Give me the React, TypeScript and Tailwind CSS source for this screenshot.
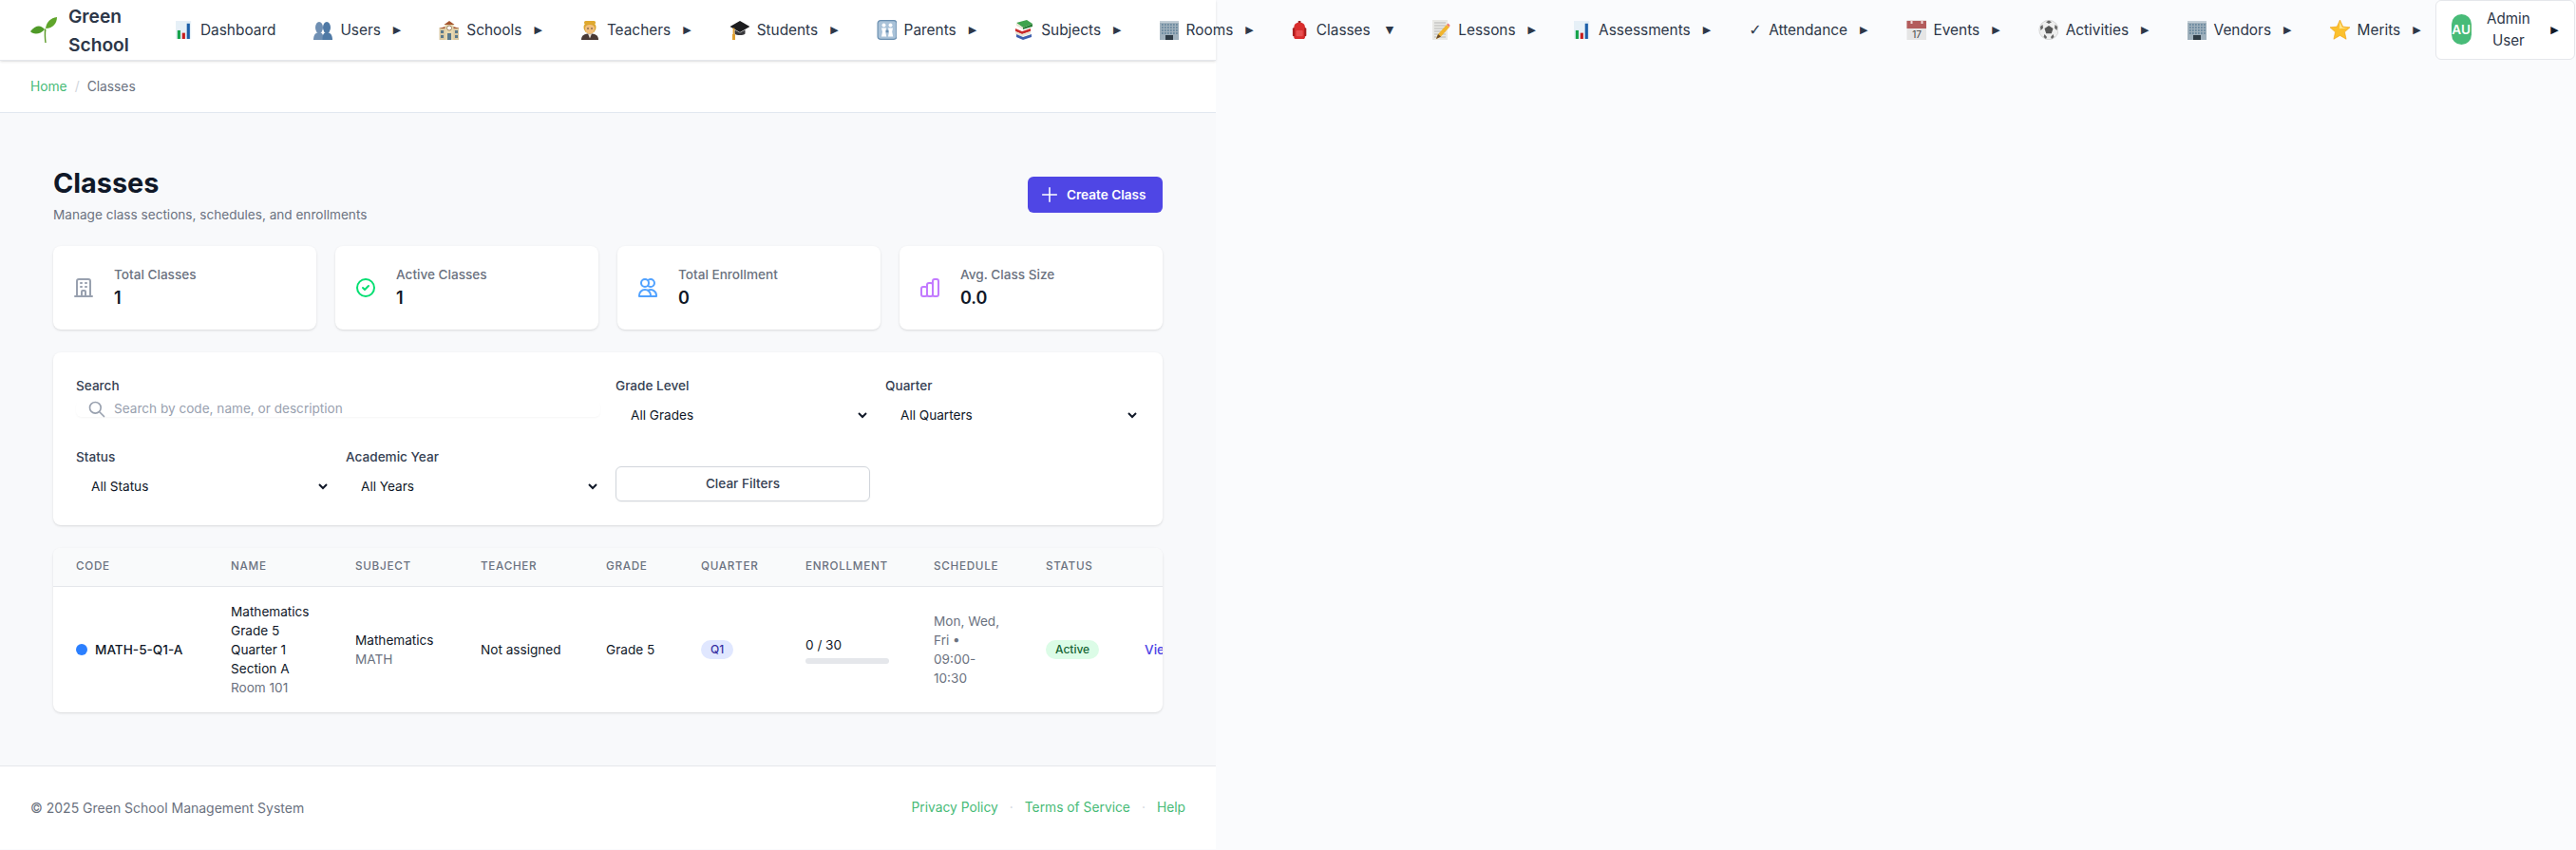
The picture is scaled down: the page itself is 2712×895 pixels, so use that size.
import React from "react";
import { HiOutlineOfficeBuilding, HiOutlineCheckCircle, HiOutlineUsers, HiOutlineChartBar, HiOutlineSearch } from "react-icons/hi";

const S = ({ w = 20, h = 21, vb = "0 0 20 21", children }: { w?: number; h?: number; vb?: string; children: React.ReactNode }) => (
  <svg width={w} height={h} viewBox={vb} className="shrink-0">{children}</svg>
);
const Chart = () => (
  <S w={18}><rect x="0" y="0" width="18" height="21" fill="#e6f0f7" /><rect x="2" y="11" width="3.500" height="10" fill="#16a34a" /><rect x="7.500" y="14" width="3.500" height="7" fill="#c81e1e" /><rect x="13" y="3" width="3.500" height="18" fill="#1d5fa8" /></S>
);
const Busts = () => (
  <S w={20}><g fill="#6f8fb3"><ellipse cx="6" cy="8" rx="4" ry="6" /><path d="M0 21c0-6 3-8 6-8s4.500 2 4.500 8z" /></g><g fill="#4f79a5"><ellipse cx="14" cy="8" rx="4" ry="6" /><path d="M9.500 21c0-6 1.500-8 4.500-8s6 2 6 8z" /></g></S>
);
const School = () => (
  <S w={21}><rect x="0" y="8" width="21" height="13" fill="#d9c9a3" /><rect x="6" y="4" width="9" height="17" fill="#e8d8b0" /><path d="M5 5l5.500-4 5.500 4z" fill="#a5562f" /><path d="M0 9l6-2v2zM21 9l-6-2v2z" fill="#a5562f" /><circle cx="10.500" cy="8.500" r="2.500" fill="#fff" stroke="#7a5a30" strokeWidth=".7" /><g fill="#5c7a8c"><rect x="1.500" y="11" width="3" height="3" /><rect x="16.500" y="11" width="3" height="3" /><rect x="1.500" y="16" width="3" height="3" /><rect x="16.500" y="16" width="3" height="3" /><rect x="8.500" y="14" width="4" height="7" /></g></S>
);
const Teacher = () => (
  <S w={20}><path d="M1 21c0-5 3-6.500 9-6.500s9 1.500 9 6.500z" fill="#4a3a35" /><path d="M8 14.500h4l-2 5z" fill="#e8e0d8" /><circle cx="10" cy="8" r="6.500" fill="#d9a52e" /><path d="M5 9c0-3 2-4 5-4s5 1 5 4c0 3-2 5.500-5 5.500S5 12 5 9z" fill="#f2bf7d" /><rect x="4" y="1" width="12" height="3.500" rx="1.500" fill="#e0a92f" /><circle cx="8" cy="9" r=".8" fill="#4a3a35" /><circle cx="12" cy="9" r=".8" fill="#4a3a35" /></S>
);
const Cap = () => (
  <S w={21}><path d="M10.500 1L21 7l-10.500 6L0 7z" fill="#1d1d1f" /><path d="M5 10.500v4c2 2 9 2 11 0v-4l-5.500 3z" fill="#38383b" /><path d="M4 8.500v8" stroke="#e0a030" strokeWidth="1.800" /><rect x="2.500" y="15" width="3" height="6" fill="#e0a030" /></S>
);
const Parents = () => (
  <S w={21}><rect x=".6" y=".6" width="19.800" height="19.800" rx="3" fill="#a9c2d8" stroke="#6a8fb0" strokeWidth="1.200" /><g fill="#fff"><circle cx="7" cy="5.500" r="2" /><path d="M4.500 8.500h5l-.8 4 1 5H4.500l1-5z" /><circle cx="14" cy="5.500" r="2" /><path d="M11.500 8.500h5l-.8 4 1 5h-5.200l1-5z" /></g><circle cx="10.500" cy="12" r="1.400" fill="#6a8fb0" /></S>
);
const Books = () => (
  <S w={20}><path d="M2 3l11-3 6 4-10 4z" fill="#3fa34d" /><path d="M2 3v3l7 4V8z" fill="#e9e5d5" /><path d="M9 8l10-4v3L9 10z" fill="#2b7f38" /><path d="M1 9l7 3 9-3v3l-9 3-7-3z" fill="#c92c2c" /><path d="M1 12l7 3 9-3v2.500l-9 3-7-3z" fill="#e9e5d5" /><path d="M2 15l7 3 9-3v3l-9 3-7-3z" fill="#3f5fae" /></S>
);
const Office = () => (
  <S w={20}><rect x="0" y="1" width="20" height="20" fill="#9fb0bc" /><rect x="0" y="1" width="20" height="2" fill="#c3ced6" /><g fill="#6d8ba0">{[4, 7, 10, 13].map(y => [2, 5, 8, 11, 14, 17].map(x => <rect key={x + "-" + y} x={x} y={y} width="1.700" height="2" />))}</g><rect x="6" y="16" width="8" height="5" fill="#2f3c46" /></S>
);
const Backpack = () => (
  <S w={18}><path d="M7.500 0h3v3h-3z" fill="#8f1c1c" /><path d="M2.500 8c0-4 2.500-6 6.500-6s6.500 2 6.500 6v11c0 1-1 2-2 2h-9c-1 0-2-1-2-2z" fill="#d92d2d" /><rect x="1" y="8" width="2.500" height="10" rx="1" fill="#a92020" /><rect x="14.500" y="8" width="2.500" height="10" rx="1" fill="#a92020" /><rect x="5" y="11" width="8" height="7" rx="1" fill="#e85050" /></S>
);
const Memo = () => (
  <S w={20} vb="-1 0 20 21"><rect x="0" y="0" width="16" height="21" fill="#e9e9e6" /><g stroke="#a9a9a9" strokeWidth=".8">{[3, 6, 9, 12, 15, 18].map(y => <path key={y} d={"M2 " + y + "h12"} />)}</g><path d="M4 20l2-5L15 5l3 2.500-9 10z" fill="#f1b52e" /><path d="M15 5l1.500-1.500 2 2L18 7.500z" fill="#e77" /><path d="M4 20l2-5 3 2.500z" fill="#6b4b2a" /></S>
);
const Cal = () => (
  <S w={21}><rect x="0" y="0" width="21" height="21" fill="#e5e5e5" /><rect x="0" y="1" width="21" height="8" fill="#b35c5c" /><rect x="4" y="0" width="2" height="4" fill="#f0d8d8" /><rect x="15" y="0" width="2" height="4" fill="#f0d8d8" /><text x="10.500" y="19" textAnchor="middle" fontSize="10" fill="#444" fontFamily="Inter, sans-serif">17</text></S>
);
const Ball = () => (
  <S w={21}><circle cx="10.500" cy="10.500" r="10.200" fill="#eee" stroke="#bbb" strokeWidth=".5" /><path d="M10.500 6l4.500 3-1.700 5.200H7.700L6 9z" fill="#555" /><path d="M10.500 .5l3 1.800-3 1.700-3-1.700zM1.500 7l2.500-2 .5 3.500L2 11zM19.500 7l-2.500-2-.5 3.500L19 11zM5 18l1-3 2.500 3-1 2zM16 18l-1-3-2.500 3 1 2z" fill="#666" /></S>
);
const Star = () => (
  <S w={21} h={21} vb="0 0 22 22"><path d="M11 0l3.300 7.400 7.700.8-5.800 5.200 1.700 7.800L11 17.200 4.100 21.200l1.700-7.800L0 8.200l7.700-.8z" fill="#fbc02d" stroke="#f09a10" strokeWidth=".6" /><path d="M11 2l2.500 6.200 5.800.6-9 1z" fill="#ffe58a" /></S>
);
const Check = () => <span className="shrink-0 w-[13px] text-center text-[16px] leading-none font-['DejaVu_Sans',sans-serif]">✓</span>;

const items: { icon: React.ReactNode; label: string; arrow?: string }[] = [
  { icon: <Chart />, label: "Dashboard", arrow: "" },
  { icon: <Busts />, label: "Users" },
  { icon: <School />, label: "Schools" },
  { icon: <Teacher />, label: "Teachers" },
  { icon: <Cap />, label: "Students" },
  { icon: <Parents />, label: "Parents" },
  { icon: <Books />, label: "Subjects" },
  { icon: <Office />, label: "Rooms" },
  { icon: <Backpack />, label: "Classes", arrow: "▼" },
  { icon: <Memo />, label: "Lessons" },
  { icon: <Chart />, label: "Assessments" },
  { icon: <Check />, label: "Attendance" },
  { icon: <Cal />, label: "Events" },
  { icon: <Ball />, label: "Activities" },
  { icon: <Office />, label: "Vendors" },
  { icon: <Star />, label: "Merits" },
];

const Arrow = ({ ch = "▶", cls = "text-[#2d3748]" }: { ch?: string; cls?: string }) => (
  <span className={(ch === "▼" ? "ml-[8px] " : "ml-[5px] ") + "text-[11px] leading-none font-['DejaVu_Sans',sans-serif] " + cls}>{ch}</span>
);

const stats = [
  { icon: <HiOutlineOfficeBuilding className="w-6 h-6 text-gray-400 shrink-0" />, label: "Total Classes", value: "1" },
  { icon: <HiOutlineCheckCircle className="w-6 h-6 text-green-400 shrink-0" />, label: "Active Classes", value: "1" },
  { icon: <HiOutlineUsers className="w-6 h-6 text-blue-400 shrink-0" />, label: "Total Enrollment", value: "0" },
  { icon: <HiOutlineChartBar className="w-6 h-6 text-purple-400 shrink-0" />, label: "Avg. Class Size", value: "0.0" },
];

const Sel = ({ label, value }: { label: string; value: string }) => (
  <div>
    <label className="block text-[13.6px] leading-[22px] font-medium text-gray-700">{label}</label>
    <select defaultValue={value} className="block w-full h-[36px] mt-[2px] pl-3 bg-white text-[13.6px] text-gray-900 rounded-md">
      <option>{value}</option>
    </select>
  </div>
);

const cols = [
  ["Code", 163], ["Name", 131], ["Subject", 132], ["Teacher", 132], ["Grade", 100], ["Quarter", 110], ["Enrollment", 135], ["Schedule", 118], ["Status", 104], ["", 110],
] as const;

const td = "px-6 py-4 text-[13.6px] leading-5 align-middle";
const gray = "text-[#6b7280]";

export default function App() {
  return (
    <div className="min-h-screen overflow-hidden bg-[#fafbfd] font-['Inter',sans-serif] text-[#2d3748]">
      <div className="w-[1280px] flex flex-col">
        <nav className="relative z-10 h-[64px] bg-white border-b border-[#e5e7eb] shadow-sm flex items-center gap-2 pl-8 whitespace-nowrap">
          <div className="flex items-center gap-3 mr-[26px] shrink-0">
            <svg width="28" height="27" viewBox="0 0 28 27" className="shrink-0">
              <path d="M15 12c-.6 5-.3 10 .3 15h1.400c-.6-5-.8-10-.2-14z" fill="#5d9c2a" />
              <path d="M16 12C17 5 21 1 28 0c0 6-4 12-12 12z" fill="#5fa52b" />
              <path d="M15 13C11 8 6 8 0 15c2 3 10 4 15-2z" fill="#4f9a28" />
            </svg>
            <span className="w-[63px] whitespace-normal text-[19.2px] leading-[30px] font-semibold text-[#2d3748]">Green School</span>
          </div>
          {items.map((it) => (
            <div key={it.label} className="flex items-center gap-2 px-4 text-[15.4px] leading-[23px] shrink-0">
              {it.icon}
              <span>{it.label}</span>
              {it.arrow !== "" && <Arrow ch={it.arrow ?? "▶"} />}
            </div>
          ))}
          <div className="flex items-center shrink-0 w-[147px] h-[63px] -ml-[9px] bg-white border border-[#e5e7eb] rounded-md pl-4 pr-4 text-[15.2px] leading-[23px] -mt-[1px]">
            <span className="w-[21px] h-8 rounded-full bg-[#48bb78] text-white text-[13.6px] font-semibold flex items-center justify-center shrink-0 overflow-hidden">AU</span>
            <span className="flex-1 whitespace-normal text-center px-3">Admin User</span>
            <Arrow cls="text-[#111827]" />
          </div>
        </nav>

        <div className="h-[55px] bg-white border-b border-[#e2e8f0] pl-8 flex items-center gap-2 text-[13.8px]">
          <span className="text-[#48bb78]">Home</span>
          <span className="text-gray-300">/</span>
          <span className={gray}>Classes</span>
        </div>

        <main className="bg-[#f8f9fb] px-14 pt-14 pb-14">
          <div className="flex items-center justify-between mb-[22px]">
            <div>
              <h1 className="text-[28.8px] leading-9 font-bold text-gray-900">Classes</h1>
              <p className={"mt-1 text-[13.6px] leading-[22px] " + gray}>Manage class sections, schedules, and enrollments</p>
            </div>
            <button className="h-[38px] w-[142px] mb-[2px] flex items-center gap-[7px] pl-3 bg-[#4f46e5] text-white rounded-md text-[13.6px] font-semibold">
              <svg width="22" height="22" viewBox="0 0 24 24" fill="none" stroke="currentColor" strokeWidth="1.700" strokeLinecap="round" className="shrink-0"><path d="M12 4v16m8-8H4" /></svg>
              Create Class
            </button>
          </div>

          <div className="grid grid-cols-4 gap-5 mb-6">
            {stats.map((s) => (
              <div key={s.label} className="h-[88px] bg-white rounded-lg shadow-sm flex items-center px-5 gap-5">
                {s.icon}
                <div>
                  <div className={"text-[13.6px] leading-[22px] font-medium " + gray}>{s.label}</div>
                  <div className="text-[18px] leading-7 font-semibold text-gray-900">{s.value}</div>
                </div>
              </div>
            ))}
          </div>

          <div className="bg-white rounded-lg shadow-sm px-6 pt-6 pb-[23px] mb-6">
            <div className="grid grid-cols-4 gap-x-4 gap-y-[15px]">
              <div className="col-span-2">
                <label className="block text-[13.6px] leading-[22px] font-medium text-gray-700">Search</label>
                <div className="mt-[5px] h-[17px] flex items-center rounded-md shadow-[0_1px_2px_rgba(0,0,0,0.04)] pl-[12px]">
                  <HiOutlineSearch className="w-5 h-5 text-gray-400 shrink-0" />
                  <span className="ml-[8px] text-[13.6px] text-gray-400">Search by code, name, or description</span>
                </div>
              </div>
              <Sel label="Grade Level" value="All Grades" />
              <Sel label="Quarter" value="All Quarters" />
              <Sel label="Status" value="All Status" />
              <Sel label="Academic Year" value="All Years" />
              <div className="flex items-end pb-[2px]">
                <button className="w-full h-[37px] bg-white border border-[#d1d5db] rounded-md text-[13.6px] font-medium text-gray-700 shadow-[0_1px_2px_rgba(0,0,0,0.04)]">Clear Filters</button>
              </div>
            </div>
          </div>

          <div className="bg-white rounded-lg shadow-sm overflow-hidden">
            <table className="table-fixed border-collapse w-[1235px]">
              <colgroup>
                {cols.map(([n, w]) => <col key={n} style={{ width: w }} />)}
              </colgroup>
              <thead className="bg-[#f9fafb]">
                <tr className="h-10 border-b border-[#e5e7eb]">
                  {cols.map(([n]) => (
                    <th key={n} className="px-6 text-left text-[11.7px] font-medium uppercase tracking-[0.06em] text-[#6b7280]">{n}</th>
                  ))}
                </tr>
              </thead>
              <tbody>
                <tr className="text-gray-900">
                  <td className={td + " font-medium whitespace-nowrap"}>
                    <div className="flex items-center gap-2">
                      <span className="w-3 h-3 rounded-full bg-blue-500 shrink-0" />MATH-5-Q1-A
                    </div>
                  </td>
                  <td className={td}>
                    <div>Mathematics Grade 5 Quarter 1 Section A</div>
                    <div className={gray}>Room 101</div>
                  </td>
                  <td className={td}>
                    <div>Mathematics</div>
                    <div className={gray}>MATH</div>
                  </td>
                  <td className={td + " whitespace-nowrap"}>Not assigned</td>
                  <td className={td}>Grade 5</td>
                  <td className={td}>
                    <span className="inline-flex items-center h-5 px-[10px] rounded-full bg-[#e0e7ff] text-[#3730a3] text-[12px] font-medium">Q1</span>
                  </td>
                  <td className={td}>
                    <div>0 / 30</div>
                    <div className="mt-[4px] h-[6px] w-[88px] rounded-sm bg-[#e5e7eb]" />
                  </td>
                  <td className={td + " " + gray}>Mon, Wed, Fri • 09:00-10:30</td>
                  <td className={td}>
                    <span className="inline-flex items-center h-5 px-[10px] rounded-full bg-[#dcfce7] text-[#166534] text-[12px] font-medium">Active</span>
                  </td>
                  <td className={td + " text-[#4f46e5] font-medium whitespace-nowrap"}>View</td>
                </tr>
              </tbody>
            </table>
          </div>
        </main>

        <footer className="h-[88px] bg-white border-t border-[#e5e7eb] px-8 flex items-center justify-between text-[13.8px]">
          <span className={"text-[14px] " + gray}>© 2025 Green School Management System</span>
          <div className="flex items-center gap-3 text-[#48bb78]">
            <span>Privacy Policy</span>
            <span className="text-gray-300">·</span>
            <span>Terms of Service</span>
            <span className="text-gray-300">·</span>
            <span>Help</span>
          </div>
        </footer>
      </div>
    </div>
  );
}
